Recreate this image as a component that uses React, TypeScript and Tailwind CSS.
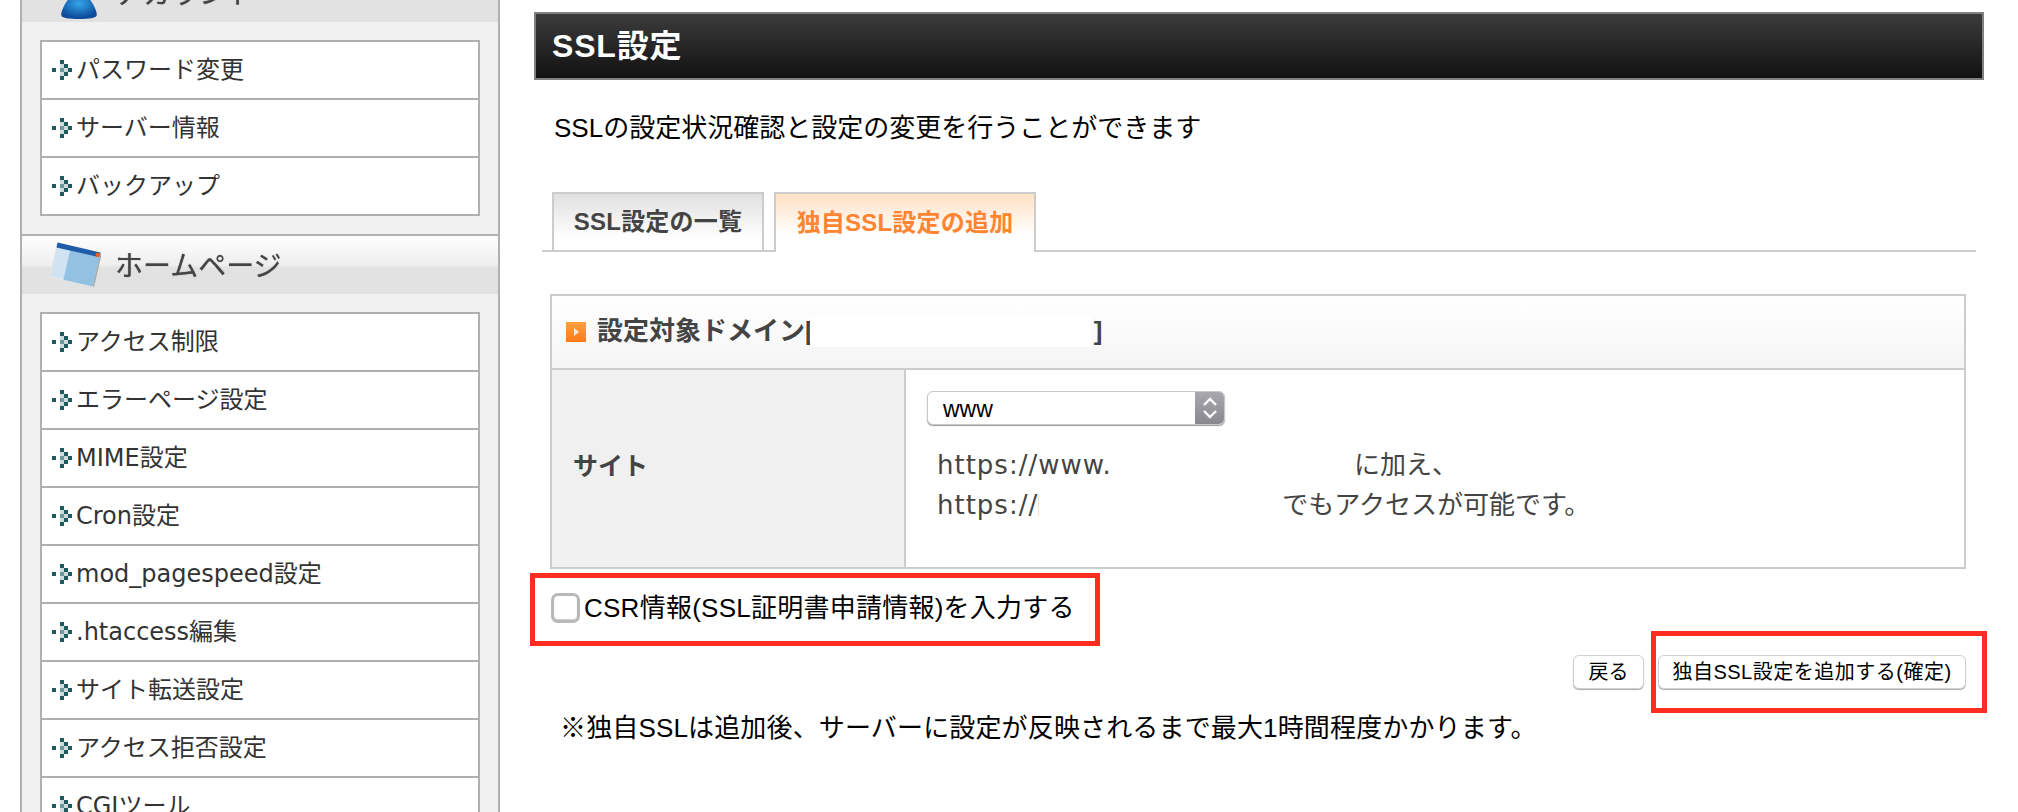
import React from 'react';

const CJK = 'font-["DejaVu_Sans","Noto_Sans_CJK_JP",sans-serif]';
const HELV = 'font-["Liberation_Sans","Noto_Sans_CJK_JP",sans-serif]';

const Bullet: React.FC = () => (
  <svg width="20" height="20" viewBox="0 0 20 20" className="shrink-0" fill="#1f5a5f">
    <rect x="0" y="8" width="4" height="4" />
    <rect x="8" y="0" width="4" height="4" />
    <rect x="12" y="4" width="4" height="4" />
    <rect x="16" y="8" width="4" height="4" />
    <rect x="12" y="12" width="4" height="4" />
    <rect x="8" y="16" width="4" height="4" />
    <rect x="8" y="8" width="4" height="4" fill="#6f989b" />
    <rect x="8" y="4" width="4" height="4" fill="#cfdcdd" />
    <rect x="8" y="12" width="4" height="4" fill="#cfdcdd" />
    <rect x="12" y="8" width="4" height="4" fill="#cfdcdd" />
  </svg>
);

const MenuList: React.FC<{ items: string[] }> = ({ items }) => (
  <ul className="mx-[18px] border-2 border-[#b0b0b0] bg-white">
    {items.map((item, i) => (
      <li
        key={item}
        className={`flex items-center gap-[4px] pl-[10px] text-[24px] text-[#333] ${
          i === items.length - 1 ? 'h-[56px]' : 'h-[58px] border-b-2 border-[#b0b0b0]'
        }`}
      >
        <Bullet />
        <span>{item}</span>
      </li>
    ))}
  </ul>
);

const SectionHeader: React.FC<{ title: string; icon: React.ReactNode; className?: string }> = ({
  title,
  icon,
  className,
}) => (
  <div
    className={`h-[60px] flex items-center border-t-2 border-[#b0b0b0] bg-[linear-gradient(#ffffff_0%,#eeeeee_50%,#e2e2e2_55%,#e2e2e2_100%)] ${className ?? ''}`}
  >
    <div className="w-[93px] shrink-0 flex justify-center pl-[4px]">{icon}</div>
    <span className="pt-[4px] text-[28px] text-[#444] blur-[0.4px] [text-shadow:0_0_1px_#666]">{title}</span>
  </div>
);

const PersonIcon = () => (
  <svg width="40" height="60" viewBox="0 0 36 60" preserveAspectRatio="none" className="ml-[16px]">
    <defs>
      <radialGradient id="dome" cx="50%" cy="35%" r="60%">
        <stop offset="0%" stopColor="#35a6e8" />
        <stop offset="100%" stopColor="#0c4c9c" />
      </radialGradient>
    </defs>
    <path d="M2 52c0-3 1-6 4-12 3-6 7-8 12-8s9 2 12 8c3 6 4 9 4 12 0 3-7 4-16 4S2 55 2 52z" fill="url(#dome)" />
  </svg>
);

const WindowIcon = () => (
  <svg width="52" height="48" viewBox="0 0 52 48" className="ml-[8px]">
    <g transform="rotate(13 26 24)">
      <rect x="4" y="7" width="44" height="34" fill="#cfe3f3" stroke="#e8e8e8" />
      <rect x="18" y="11" width="30" height="30" fill="#93c1e2" />
      <rect x="4" y="6" width="44" height="5" fill="#1f5ba6" />
      <rect x="44" y="7" width="4" height="4" fill="#e8622c" />
      <rect x="48" y="7" width="1.5" height="34" fill="#a8a8a8" />
    </g>
  </svg>
);

export default function App() {
  return (
    <div className={`relative w-[2018px] h-[812px] overflow-hidden bg-white flex ${CJK}`}>
      {/* sidebar */}
      <aside className="ml-[20px] w-[480px] shrink-0 h-[900px] -mt-[38px] border-x-2 border-[#b0b0b0] bg-[#f1f1f1]">
        <SectionHeader title="アカウント" icon={<PersonIcon />} className="border-t-0" />
        <div className="py-[18px]">
          <MenuList items={['パスワード変更', 'サーバー情報', 'バックアップ']} />
        </div>
        <SectionHeader title="ホームページ" icon={<WindowIcon />} />
        <div className="py-[18px]">
          <MenuList
            items={[
              'アクセス制限',
              'エラーページ設定',
              'MIME設定',
              'Cron設定',
              'mod_pagespeed設定',
              '.htaccess編集',
              'サイト転送設定',
              'アクセス拒否設定',
              'CGIツール',
            ]}
          />
        </div>
      </aside>

      {/* main */}
      <main className="ml-[34px] w-[1450px] shrink-0 pt-[12px]">
        <h1
          className={`h-[68px] flex items-center pl-[16px] border-2 border-[#808080] bg-[linear-gradient(#3c3c3c,#111111)] text-white text-[32px] font-bold tracking-[0.8px] ${HELV}`}
        >
          SSL設定
        </h1>

        <p className={`mt-[30px] ml-[20px] text-[26px] leading-[36px] text-black ${HELV}`}>
          SSLの設定状況確認と設定の変更を行うことができます
        </p>

        {/* tabs */}
        <div className={`mt-[46px] ml-[8px] w-[1434px] h-[60px] flex items-end gap-[10px] pl-[10px] border-b-2 border-[#cccccc] ${HELV}`}>
          <div className="w-[212px] h-[58px] flex items-center justify-center border-2 border-b-0 border-[#cccccc] bg-[linear-gradient(#e0e0e0,#ffffff_80%)] text-[24px] font-bold text-[#444] tracking-[0.2px]">
            SSL設定の一覧
          </div>
          <div className="w-[262px] h-[60px] -mb-[2px] flex items-center justify-center border-2 border-b-0 border-[#cccccc] bg-[linear-gradient(#ffe0c4,#ffffff_70%)] text-[24px] font-bold text-[#ff8533] tracking-[0.2px]">
            独自SSL設定の追加
          </div>
        </div>

        {/* table */}
        <div className="mt-[42px] ml-[16px] w-[1416px] border-2 border-[#cccccc]">
          <div className="h-[74px] flex items-center pl-[14px] pb-[1px] border-b-2 border-[#cccccc] bg-[linear-gradient(#ffffff,#f5f5f5)] text-[26px] font-bold text-[#444]">
            <span className="w-[20px] h-[20px] mt-[1px] mr-[11px] flex items-center justify-center bg-[linear-gradient(#ffa040,#ff7a1a)]">
              <span className="w-0 h-0 border-y-[4px] border-y-transparent border-l-[5px] border-l-[#ffe8d0] blur-[0.5px]" />
            </span>
            <span className={HELV}>設定対象ドメイン[</span>
            <span className="w-[281px] h-[31px] -ml-[4px] mr-[4px] bg-white" />
            <span className={`-ml-[1px] ${HELV}`}>]</span>
          </div>
          <div className="h-[197px] flex">
            <div className="w-[354px] shrink-0 flex items-center pl-[21px] pb-[4px] border-r-2 border-[#cccccc] bg-[#f0f0f0] text-[25px] font-bold text-[#444]">
              サイト
            </div>
            <div className="flex-1 pl-[21px] pt-[21px]">
              <div className={`w-[298px] h-[34px] flex justify-between rounded-[6px] border border-[#c8c8c8] bg-white shadow-[0_1px_1px_#999] overflow-hidden ${HELV}`}>
                <span className="pl-[15px] text-[23px] leading-[34px] text-black">www</span>
                <span className="w-[29px] flex items-center justify-center bg-[linear-gradient(#a8a8ae,#88888e)]">
                  <svg width="16" height="24" viewBox="0 0 16 24" fill="none" stroke="#ffffff" strokeWidth="2.4">
                    <path d="M2 9l6-6 6 6" />
                    <path d="M2 15l6 6 6-6" />
                  </svg>
                </span>
              </div>
              <div className="mt-[20px] ml-[10px] text-[26px] leading-[40px] text-[#444]">
                <div className="flex">
                  <span className="tracking-[1px]">https://www.</span>
                  <span className="w-[242px] shrink-0" />
                  <span className={HELV}>に加え、</span>
                </div>
                <div className="flex items-center">
                  <span className="tracking-[1px]">https://</span>
                  <span className="w-px h-[22px] bg-[#f2e2cc]" />
                  <span className="w-[243px] shrink-0" />
                  <span className={HELV}>でもアクセスが可能です。</span>
                </div>
              </div>
            </div>
          </div>
        </div>

        {/* csr option */}
        <div className={`mt-[24px] ml-[17px] flex items-center gap-[4px] text-[26px] leading-[30px] text-black tracking-[0.25px] ${HELV}`}>
          <span className="w-[29px] h-[30px] rounded-[7px] border-[3px] border-[#b8b8b8] bg-white shadow-[inset_0_-1px_1px_#ccc]" />
          <span>CSR情報(SSL証明書申請情報)を入力する</span>
        </div>

        {/* actions */}
        <div className={`mt-[32px] mr-[18px] flex justify-end gap-[14px] text-[20px] text-black ${HELV}`}>
          <button className="w-[71px] h-[34px] rounded-[6px] border border-[#d0d0d0] bg-white shadow-[0_1px_1px_#aaa]">戻る</button>
          <button className="w-[308px] h-[34px] rounded-[6px] border border-[#d0d0d0] bg-white tracking-[0.5px] shadow-[0_1px_1px_#aaa]">
            独自SSL設定を追加する(確定)
          </button>
        </div>

        <p className={`mt-[21px] ml-[26px] text-[26px] leading-[36px] text-black tracking-[0.15px] ${HELV}`}>
          ※独自SSLは追加後、サーバーに設定が反映されるまで最大1時間程度かかります。
        </p>
      </main>

      {/* red annotation boxes */}
      <div className="absolute left-[530px] top-[573px] w-[570px] h-[73px] border-[5px] border-[#ff2d20]" />
      <div className="absolute left-[1651px] top-[631px] w-[336px] h-[82px] border-[5px] border-[#ff2d20]" />
    </div>
  );
}
